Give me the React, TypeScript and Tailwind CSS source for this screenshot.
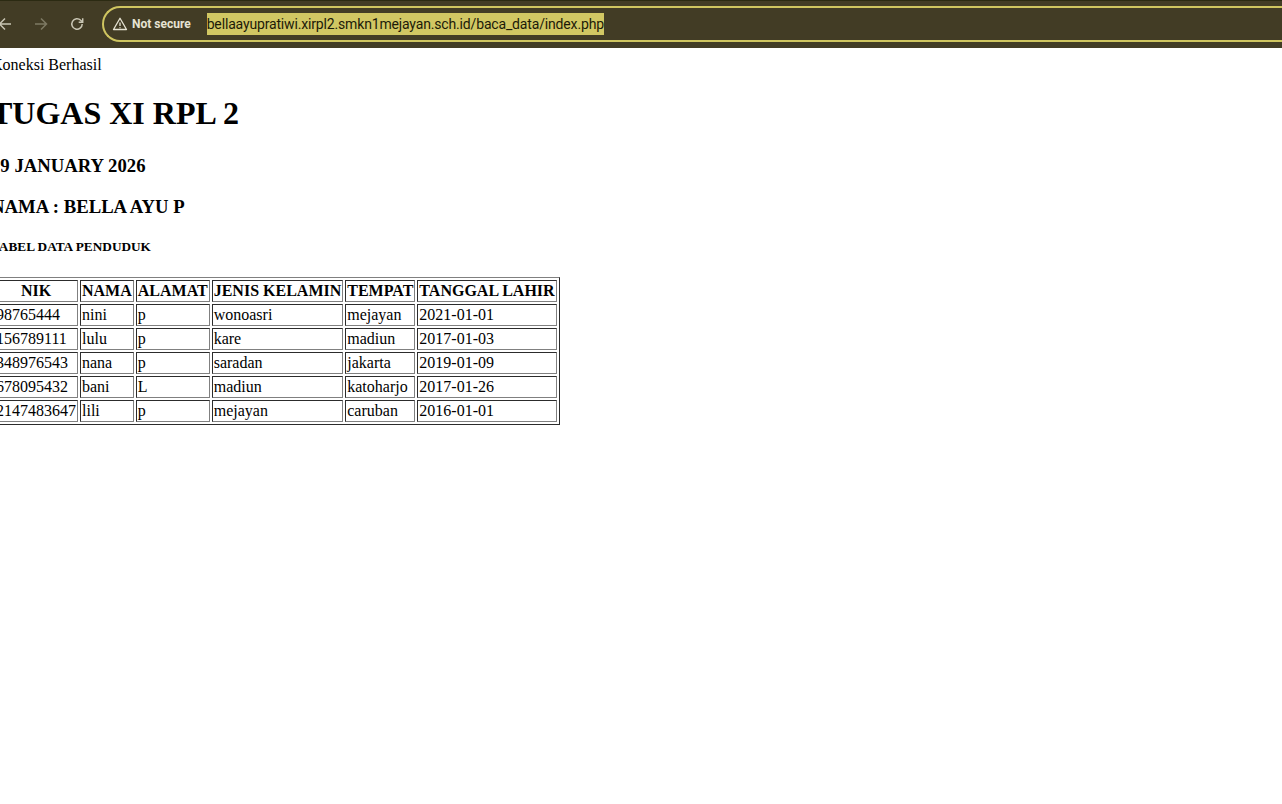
import React from 'react';

const rows = [
  ['98765444', 'nini', 'p', 'wonoasri', 'mejayan', '2021-01-01'],
  ['156789111', 'lulu', 'p', 'kare', 'madiun', '2017-01-03'],
  ['348976543', 'nana', 'p', 'saradan', 'jakarta', '2019-01-09'],
  ['678095432', 'bani', 'L', 'madiun', 'katoharjo', '2017-01-26'],
  ['2147483647', 'lili', 'p', 'mejayan', 'caruban', '2016-01-01'],
];

const headers = ['NIK', 'NAMA', 'ALAMAT', 'JENIS KELAMIN', 'TEMPAT', 'TANGGAL LAHIR'];

const App: React.FC = () => {
  return (
    <div className="min-h-[804px] overflow-hidden bg-white font-['Liberation_Serif',serif] text-[16px] leading-[normal] text-black">
      {/* BROWSER BAR */}
      <div className="h-[48px] bg-[#423c25] font-['Roboto',sans-serif]">
        <div className="h-px bg-[#2b2a12]"></div>
        <div className="flex items-center pt-[5px]">
          <div className="flex w-[102px] shrink-0 items-center">
            <svg className="ml-[-3px]" width="16" height="16" viewBox="0 0 16 16" fill="none" stroke="#c9c6b4" strokeWidth="1.5">
              <path d="M14 8H2.5M8 2.5 2.5 8 8 13.5" />
            </svg>
            <svg className="ml-[20px]" width="16" height="16" viewBox="0 0 16 16" fill="none" stroke="#7d7963" strokeWidth="1.5">
              <path d="M2 8h11.5M8 2.5 13.5 8 8 13.5" />
            </svg>
            <svg className="ml-[20px]" width="16" height="16" viewBox="0 0 16 16" fill="none" stroke="#c9c6b4" strokeWidth="1.5">
              <path d="M13.2 8a5.2 5.2 0 1 1-1.5-3.7L13.5 6" />
              <path d="M13.7 2.2v4h-4" />
            </svg>
          </div>
          <div className="flex h-[36px] flex-1 items-center rounded-l-[18px] border-2 border-r-0 border-[#cfc560] pl-[8px]">
            <svg width="16" height="16" viewBox="0 0 16 16" fill="none" stroke="#e6e3d3" strokeWidth="1.3">
              <path d="M8 2.2 14.5 13.5H1.5Z" strokeLinejoin="round" />
              <path d="M8 6.5v3.6M8 11.2v1" />
            </svg>
            <span className="ml-[4px] text-[12px] font-bold text-[#e6e3d3]">Not secure</span>
            <span className="ml-[16px] bg-[#d1c763] text-[14px] leading-[22px] tracking-[-0.16px] text-[#1c1a08]">
              bellaayupratiwi.xirpl2.smkn1mejayan.sch.id/baca_data/index.php
            </span>
          </div>
        </div>
      </div>

      {/* PAGE */}
      <div className="ml-[-9px] mt-[8px]">
        <div>Koneksi Berhasil</div>
        <h1 className="mb-[22.44px] mt-[21.44px] text-[32px] font-bold">TUGAS XI RPL 2</h1>
        <h3 className="my-[18.72px] text-[18.72px] font-bold">19 JANUARY 2026</h3>
        <h3 className="my-[18.72px] text-[18.72px] font-bold">NAMA : BELLA AYU P</h3>
        <h5 className="mb-[22.18px] mt-[21.18px] text-[13.28px] font-bold">TABEL DATA PENDUDUK</h5>
        <table className="border-separate border-spacing-[2px] border border-[#808080] [border-style:outset]">
          <thead>
            <tr>
              {headers.map((h) => (
                <th key={h} className="border border-[#808080] p-px font-bold [border-style:inset]">
                  {h}
                </th>
              ))}
            </tr>
          </thead>
          <tbody>
            {rows.map((row) => (
              <tr key={row[0]}>
                {row.map((cell, i) => (
                  <td key={i} className="border border-[#808080] p-px [border-style:inset]">
                    {cell}
                  </td>
                ))}
              </tr>
            ))}
          </tbody>
        </table>
      </div>
    </div>
  );
};

export default App;
